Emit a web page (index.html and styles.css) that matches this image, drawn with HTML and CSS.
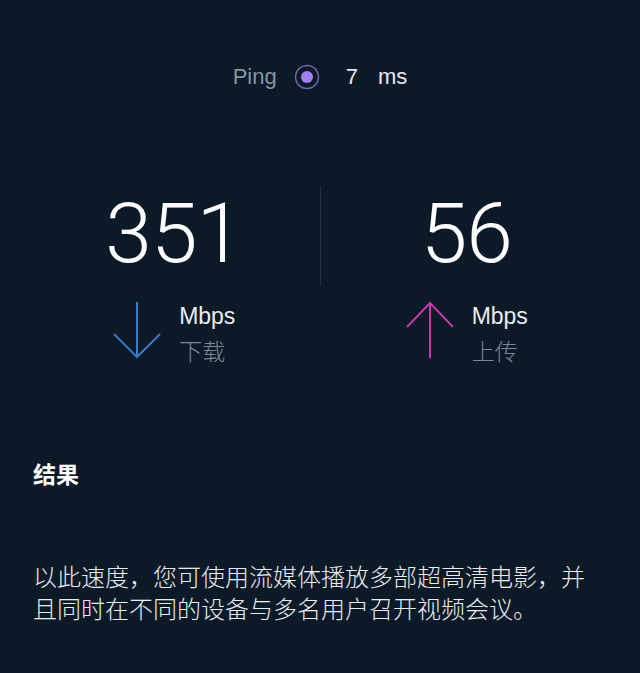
FILE: index.html
```html
<!DOCTYPE html>
<html lang="zh-CN">
<head>
    <meta charset="UTF-8">
    <meta name="viewport" content="width=device-width, initial-scale=1.0">
    <title>测速结果</title>
    <link rel="stylesheet" href="styles.css">
</head>
<body>
    <div class="ping">
        <span class="ping-label">Ping</span>
        <svg class="ping-icon" width="26" height="26" viewBox="0 0 26 26">
            <circle cx="13" cy="13" r="11.5" fill="none" stroke="#6c64a6" stroke-width="1.5"/>
            <circle cx="13" cy="13" r="6" fill="#a47ff0"/>
        </svg>
        <span class="ping-value">7</span>
        <span class="ping-unit">ms</span>
    </div>

    <div class="speeds">
        <div class="speed">
            <div class="speed-num">351</div>
            <div class="speed-info">
                <svg class="arrow" width="50" height="58" viewBox="0 0 50 58">
                    <path d="M25 1 V56 M2 33 L25 56 L48 33" fill="none" stroke="#3b78c8" stroke-width="2"/>
                </svg>
                <div class="speed-text">
                    <span class="unit">Mbps</span>
                    <span class="kind">下载</span>
                </div>
            </div>
        </div>
        <div class="divider"></div>
        <div class="speed">
            <div class="speed-num">56</div>
            <div class="speed-info">
                <svg class="arrow" width="50" height="58" viewBox="0 0 50 58">
                    <path d="M25 57 V2 M2 26 L25 2 L48 26" fill="none" stroke="#c13aa9" stroke-width="2"/>
                </svg>
                <div class="speed-text">
                    <span class="unit">Mbps</span>
                    <span class="kind">上传</span>
                </div>
            </div>
        </div>
    </div>

    <div class="result">
        <h2 class="result-title">结果</h2>
        <p class="result-text">以此速度，您可使用流媒体播放多部超高清电影，并且同时在不同的设备与多名用户召开视频会议。</p>
    </div>
</body>
</html>
```

FILE: styles.css
```css
body{
    margin: 0;
    background-color: #0c1927;
    color: #ffffff;
    font-family: "Liberation Sans", "Noto Sans CJK SC", sans-serif;
    height: 673px;
    overflow: hidden;
}
.ping{
    display: flex;
    align-items: center;
    justify-content: center;
    padding-top: 62px;
    height: 30px;
    font-size: 22px;
}
.ping-label{
    color: #8994a3;
    margin-right: 17px;
}
.ping-icon{
    margin-right: 26px;
}
.ping-value{
    color: #e6e9ee;
    margin-right: 20px;
}
.ping-unit{
    color: #e6e9ee;
}

.speeds{
    display: flex;
    justify-content: center;
    margin-top: 94px;
    padding: 0 28px;
}
.speed{
    flex: 1;
    display: flex;
    flex-direction: column;
    align-items: center;
}
.divider{
    width: 1px;
    height: 100px;
    background-color: #25313f;
}
.speed-num{
    font-family: Roboto, "Liberation Sans", sans-serif;
    font-weight: 300;
    font-size: 84px;
    line-height: 84px;
    margin-top: 6px;
    letter-spacing: -1px;
}
.speed-info{
    display: flex;
    align-items: flex-start;
    margin-top: 25px;
}
.arrow{
    margin-right: 17px;
}
.speed-text{
    display: flex;
    flex-direction: column;
    font-size: 23px;
    line-height: 34px;
    margin-top: -2px;
}
.unit{
    color: #e9edf2;
}
.kind{
    color: #7c8797;
    font-family: "Noto Sans CJK SC", sans-serif;
    font-weight: 300;
}

.result{
    padding: 0 33px;
    margin-top: 90px;
}
.result-title{
    margin: 0;
    font-family: "Noto Sans CJK SC", sans-serif;
    font-size: 23px;
    font-weight: 700;
    line-height: 32px;
}
.result-text{
    margin: 71px 0 0;
    font-family: "Noto Sans CJK SC", sans-serif;
    font-size: 24px;
    font-weight: 300;
    line-height: 32px;
    color: #e8ebf0;
}
```
